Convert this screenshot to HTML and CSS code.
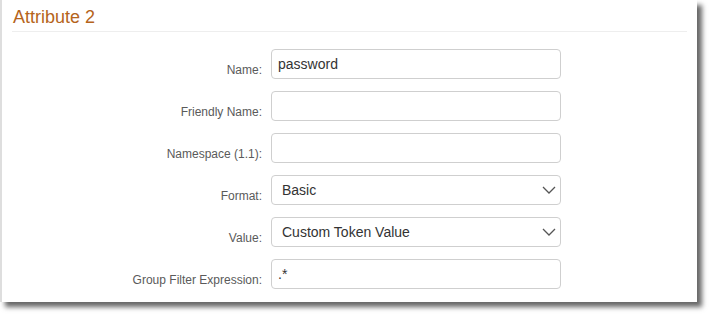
FILE: index.html
```html
<!DOCTYPE html>
<html lang="en">
<head>
  <meta charset="UTF-8">
  <title>Attribute 2</title>
  <link rel="stylesheet" href="styles.css">
</head>
<body>

  <div class="panel">
    <h2 class="panel-title">Attribute 2</h2>

    <form class="attr-form">
      <label for="name">Name:</label>
      <input type="text" id="name" value="password" />

      <label for="friendly">Friendly Name:</label>
      <input type="text" id="friendly" />

      <label for="ns">Namespace (1.1):</label>
      <input type="text" id="ns" />

      <label for="format">Format:</label>
      <div class="select-wrap">
        <select id="format">
          <option>Basic</option>
          <option>URI</option>
          <option>Unspecified</option>
        </select>
        <svg class="chevron" width="14" height="8" viewBox="0 0 14 8"><path d="M1 1 L7 7 L13 1" fill="none" stroke="#555" stroke-width="1.3"/></svg>
      </div>

      <label for="value">Value:</label>
      <div class="select-wrap">
        <select id="value">
          <option>Custom Token Value</option>
          <option>Username</option>
        </select>
        <svg class="chevron" width="14" height="8" viewBox="0 0 14 8"><path d="M1 1 L7 7 L13 1" fill="none" stroke="#555" stroke-width="1.3"/></svg>
      </div>

      <label for="filter">Group Filter Expression:</label>
      <input type="text" id="filter" value=".*" />
    </form>
  </div>

</body>
</html>
```

FILE: styles.css
```css
html, body { height: 100%; }
body { margin: 0; background: #fff; font-family: "Liberation Sans", Arial, sans-serif; }
.panel { width: 697px; height: 302px; border-left: 2px solid #dedede; background: #fff; box-shadow: 5px 5px 5px rgba(0,0,0,0.6); box-sizing: border-box; padding: 0 10px 0 10px; }
.panel-title { margin: 0; padding: 8px 0 5px 1px; font-size: 18px; font-weight: normal; line-height: 18px; color: #b5641b; border-bottom: 1px solid #eeeeee; }
.attr-form { display: grid; grid-template-columns: 250px 290px; column-gap: 9px; row-gap: 12px; margin-top: 17px; align-items: end; }
.attr-form label { text-align: right; font-size: 12px; line-height: 14px; color: #5a5a5a; padding-bottom: 2px; }
.attr-form input, .attr-form select { width: 290px; height: 30px; box-sizing: border-box; border: 1px solid #cfcfcf; border-radius: 4px; font-family: "Liberation Sans", Arial, sans-serif; font-size: 14px; color: #333; background: #fff; margin: 0; }
.attr-form input { padding: 0 6px; }
.select-wrap { position: relative; width: 290px; height: 30px; }
.attr-form select { appearance: none; -webkit-appearance: none; padding: 0 30px 0 10px; }
.chevron { position: absolute; right: 5px; top: 11px; pointer-events: none; }
```
